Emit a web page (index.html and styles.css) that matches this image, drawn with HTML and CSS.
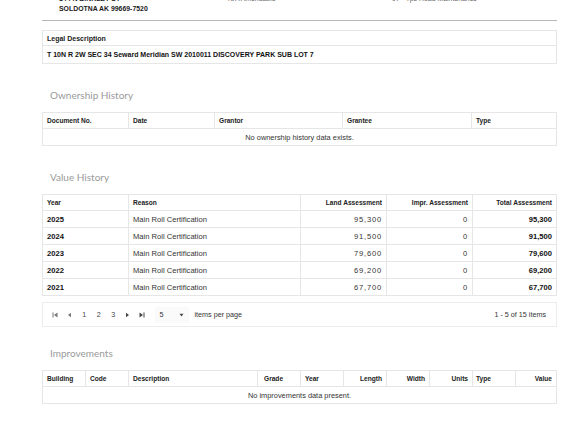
FILE: index.html
```html
<!DOCTYPE html>
<html>
<head>
<meta charset="utf-8">
<link rel="stylesheet" href="styles.css">
</head>
<body>
<div class="page">
  <div class="top">
    <div class="tcol c1"><div>144 N BINKLEY ST</div><div>SOLDOTNA AK 99669-7520</div></div>
    <div class="tcol c2"><div class="light">N/A Amendable</div></div>
    <div class="tcol c3"><div class="light">97 - Tpz Road Maintenance</div></div>
  </div>

  <table class="grid legal">
    <tr><th>Legal Description</th></tr>
    <tr><td class="legaltext">T 10N R 2W SEC 34 Seward Meridian SW 2010011 DISCOVERY PARK SUB LOT 7</td></tr>
  </table>

  <h2 class="title">Ownership History</h2>
  <table class="grid">
    <colgroup><col style="width:86px"><col style="width:86px"><col style="width:128px"><col style="width:129px"><col></colgroup>
    <tr><th>Document No.</th><th>Date</th><th>Grantor</th><th>Grantee</th><th>Type</th></tr>
    <tr><td colspan="5" class="empty">No ownership history data exists.</td></tr>
  </table>

  <h2 class="title">Value History</h2>
  <table class="grid values">
    <colgroup><col style="width:86px"><col style="width:172px"><col style="width:86px"><col style="width:86px"><col></colgroup>
    <tr><th>Year</th><th>Reason</th><th class="r">Land Assessment</th><th class="r">Impr. Assessment</th><th class="r">Total Assessment</th></tr>
    <tr><td class="b">2025</td><td>Main Roll Certification</td><td class="r num">95,300</td><td class="r num">0</td><td class="r b">95,300</td></tr>
    <tr><td class="b">2024</td><td>Main Roll Certification</td><td class="r num">91,500</td><td class="r num">0</td><td class="r b">91,500</td></tr>
    <tr><td class="b">2023</td><td>Main Roll Certification</td><td class="r num">79,600</td><td class="r num">0</td><td class="r b">79,600</td></tr>
    <tr><td class="b">2022</td><td>Main Roll Certification</td><td class="r num">69,200</td><td class="r num">0</td><td class="r b">69,200</td></tr>
    <tr><td class="b">2021</td><td>Main Roll Certification</td><td class="r num">67,700</td><td class="r num">0</td><td class="r b">67,700</td></tr>
  </table>
  <div class="pager">
    <div class="pnav">
      <span class="pi"><svg width="6" height="6" viewBox="0 0 6 6"><rect x="0.5" y="0.5" width="1" height="5" fill="#777"/><path d="M5.5 0.5 L2 3 L5.5 5.5Z" fill="#777"/></svg></span>
      <span class="pi"><svg width="5" height="6" viewBox="0 0 5 6"><path d="M4 0.8 L1 3 L4 5.2Z" fill="#777"/></svg></span>
      <span class="pn">1</span><span class="pn">2</span><span class="pn">3</span>
      <span class="pi"><svg width="5" height="6" viewBox="0 0 5 6"><path d="M1 0.8 L4 3 L1 5.2Z" fill="#444"/></svg></span>
      <span class="pi"><svg width="6" height="6" viewBox="0 0 6 6"><path d="M0.5 0.5 L4 3 L0.5 5.5Z" fill="#444"/><rect x="4.5" y="0.5" width="1" height="5" fill="#444"/></svg></span>
      <span class="psize">5<svg width="5" height="4" viewBox="0 0 5 4"><path d="M0.5 0.8 L4.5 0.8 L2.5 3.4Z" fill="#444"/></svg></span>
      <span class="pper">items per page</span>
    </div>
    <div class="pinfo">1 - 5 of 15 items</div>
  </div>

  <h2 class="title t3">Improvements</h2>
  <table class="grid impr">
    <colgroup><col style="width:43px"><col style="width:43px"><col style="width:129px"><col style="width:43px"><col style="width:43px"><col style="width:43px"><col style="width:43px"><col style="width:43px"><col style="width:43px"><col></colgroup>
    <tr><th>Building</th><th>Code</th><th>Description</th><th class="g">Grade</th><th>Year</th><th class="r">Length</th><th class="r">Width</th><th class="r">Units</th><th class="nb">Type</th><th class="r">Value</th></tr>
    <tr><td colspan="10" class="empty">No improvements data present.</td></tr>
  </table>
</div>
</body>
</html>
```
FILE: styles.css
```css
* { box-sizing: border-box; }
body {
  margin: 0;
  background: #fff;
  font-family: "Liberation Sans", Arial, sans-serif;
  color: #1a1a1a;
}
.page {
  padding: 0 19px 40px 42px;
}
.top {
  display: flex;
  margin-top: -6px;
  height: 27px;
  border-bottom: 1px solid #b8b8b8;
  font-size: 6.9px;
  line-height: 10px;
}
.tcol { font-weight: bold; }
.c1 { padding-left: 17px; width: 186px; }
.c2 { width: 164px; }
.light { font-weight: normal; color: #666; }
table.grid {
  width: 515px;
  border-collapse: collapse;
  table-layout: fixed;
  border: 1px solid #e6e6e6;
  font-size: 7.2px;
}
table.grid th, table.grid td {
  border: 1px solid #e6e6e6;
  text-align: left;
  padding: 0 4px;
  white-space: nowrap;
  overflow: hidden;
  color: #333;
}
table.grid th {
  font-weight: bold;
  height: 16px;
  font-size: 6.6px;
  color: #222;
}
table.grid td { height: 17px; }
.legal { margin-top: 9px; }
table.grid.legal th { height: 15px; font-size: 7px; }
table.grid td.legaltext { font-weight: bold; font-size: 7px; height: 18px; color: #111; }
.title {
  font-family: "Lato", "Open Sans", sans-serif;
  font-weight: normal;
  font-size: 10px;
  color: #9a9a9a;
  margin: 0;
  padding: 22px 0 8px 8px;
  line-height: 18px;
}
.title.t3 { padding-top: 17px; }
table.grid td.empty { text-align: center; font-size: 7.4px; }
table.grid.values td { font-size: 7.6px; }
table.grid.values td.b { font-weight: bold; color: #111; }
table.grid td.num { letter-spacing: 0.8px; padding-right: 4px; }
table.grid .r { text-align: right; }
table.grid th.g { padding-left: 6px; }
table.grid th.nb { border-left-color: transparent; padding-left: 3px; }
.pager {
  width: 515px;
  margin-top: 6px;
  height: 25px;
  border: 1px solid #ececec;
  display: flex;
  align-items: center;
  justify-content: space-between;
  padding: 0 10px 0 5px;
  font-size: 7.2px;
  color: #333;
}
.pnav { display: flex; align-items: center; }
.pi { display: inline-flex; width: 14.5px; justify-content: center; align-items: center; }
.pn { width: 14.5px; text-align: center; color: #444; }
.psize {
  display: inline-flex;
  align-items: center;
  justify-content: space-between;
  width: 34px;
  margin-left: 5px;
  padding: 0 5px 0 5px;
  height: 16px;
  background: #fafafa;
}
.pper { margin-left: 6px; }
.pinfo { color: #333; }
```
